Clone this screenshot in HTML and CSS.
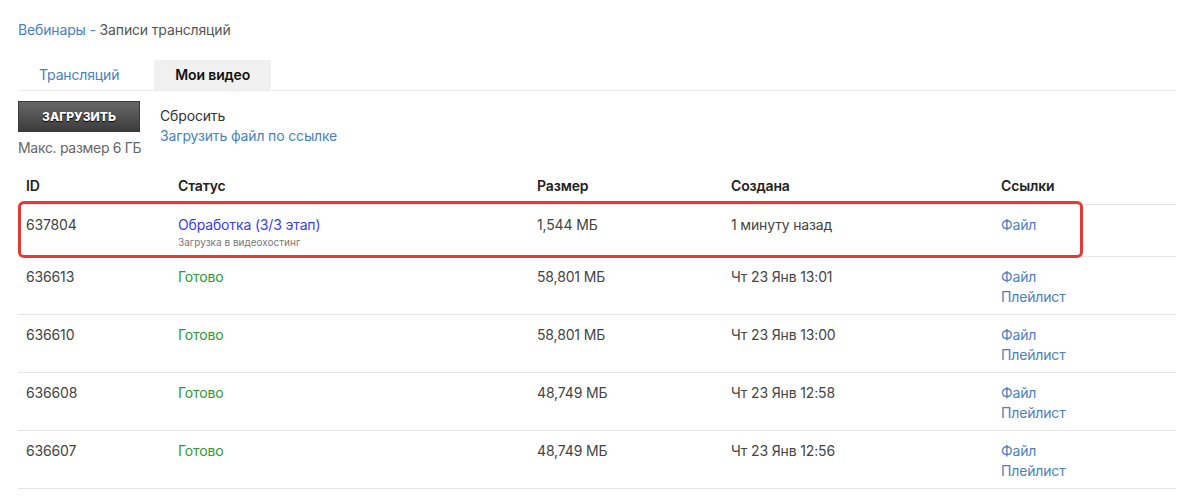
FILE: index.html
```html
<!DOCTYPE html>
<html lang="ru">
<head>
    <meta charset="UTF-8">
    <meta name="viewport" content="width=device-width, initial-scale=1.0">
    <title>Записи трансляций</title>
    <link rel="stylesheet" href="styles.css">
</head>
<body>
    <div class="page">
        <div class="breadcrumbs">
            <a href="#">Вебинары</a> - <span class="current">Записи трансляций</span>
        </div>

        <div class="tabs">
            <a href="#" class="tab">Трансляций</a>
            <a href="#" class="tab active">Мои видео</a>
        </div>

        <div class="upload">
            <div class="upload-left">
                <button class="btn-upload">Загрузить</button>
                <div class="hint">Макс. размер 6 ГБ</div>
            </div>
            <div class="upload-right">
                <div class="reset">Сбросить</div>
                <a href="#">Загрузить файл по ссылке</a>
            </div>
        </div>

        <table class="videos">
            <thead>
                <tr>
                    <th class="col-id">ID</th>
                    <th class="col-status">Статус</th>
                    <th class="col-size">Размер</th>
                    <th class="col-date">Создана</th>
                    <th class="col-links">Ссылки</th>
                </tr>
            </thead>
            <tbody>
                <tr class="marked">
                    <td>637804<span class="mark"></span></td>
                    <td>
                        <span class="processing">Обработка (3/3 этап)</span>
                        <div class="sub">Загрузка в видеохостинг</div>
                    </td>
                    <td>1,544 МБ</td>
                    <td>1 минуту назад</td>
                    <td><a href="#">Файл</a></td>
                </tr>
                <tr>
                    <td>636613</td>
                    <td><span class="ready">Готово</span></td>
                    <td>58,801 МБ</td>
                    <td>Чт 23 Янв 13:01</td>
                    <td><a href="#">Файл</a><br><a href="#">Плейлист</a></td>
                </tr>
                <tr>
                    <td>636610</td>
                    <td><span class="ready">Готово</span></td>
                    <td>58,801 МБ</td>
                    <td>Чт 23 Янв 13:00</td>
                    <td><a href="#">Файл</a><br><a href="#">Плейлист</a></td>
                </tr>
                <tr>
                    <td>636608</td>
                    <td><span class="ready">Готово</span></td>
                    <td>48,749 МБ</td>
                    <td>Чт 23 Янв 12:58</td>
                    <td><a href="#">Файл</a><br><a href="#">Плейлист</a></td>
                </tr>
                <tr>
                    <td>636607</td>
                    <td><span class="ready">Готово</span></td>
                    <td>48,749 МБ</td>
                    <td>Чт 23 Янв 12:56</td>
                    <td><a href="#">Файл</a><br><a href="#">Плейлист</a></td>
                </tr>
            </tbody>
        </table>
    </div>
</body>
</html>
```

FILE: styles.css
```css
body { margin: 0; background-color: #fff; font-family: Inter, "Noto Sans", sans-serif; font-size: 14px; line-height: 20px; letter-spacing: -0.15px; color: #444; }
a { color: #4a80c2; text-decoration: none; }
.page { width: 1158px; padding: 20px 0 0 18px; }
.breadcrumbs { color: #4a80c2; height: 20px; }
.breadcrumbs .current { color: #555; }
.tabs { display: flex; margin-top: 20px; border-bottom: 1px solid #ececec; height: 30px; }
.tab { padding: 5px 21px; margin-right: 14px; color: #4a80c2; }
.tab.active { background-color: #f0f0f0; color: #111; font-weight: 600; }
.upload { display: flex; margin-top: 10px; }
.upload-left { width: 142px; }
.btn-upload { display: block; width: 122px; height: 31px; border: 1px solid #3a3a3a; background: linear-gradient(#676767, #3c3c3c); color: #fff; font-family: inherit; font-size: 12px; font-weight: 800; letter-spacing: 0; text-transform: uppercase; text-shadow: 0 1px 1px #000; cursor: pointer; }
.hint { margin-top: 6px; color: #666; letter-spacing: -0.3px; }
.upload-right { padding-top: 5px; }
.reset { color: #333; }
.videos { width: 100%; border-collapse: collapse; margin-top: 8px; }
.videos th { text-align: left; font-weight: 600; color: #222; padding: 10px 8px 8px; border-bottom: 1px solid #e2e2e2; }
.videos td { vertical-align: top; padding: 10px 8px 7px; border-bottom: 1px solid #e6e6e6; }
.col-id { width: 136px; }
.col-status { width: 343px; }
.col-size { width: 178px; }
.col-date { width: 254px; }
.processing { color: #3b3bf0; }
.sub { font-size: 10px; line-height: 14px; letter-spacing: 0; color: #777; }
.ready { color: #2f9a2f; }
.marked td:first-child { position: relative; }
.mark { position: absolute; left: 0; top: -4px; width: 1059px; height: 51px; border: 3px solid #e53935; border-radius: 6px; pointer-events: none; }
```
